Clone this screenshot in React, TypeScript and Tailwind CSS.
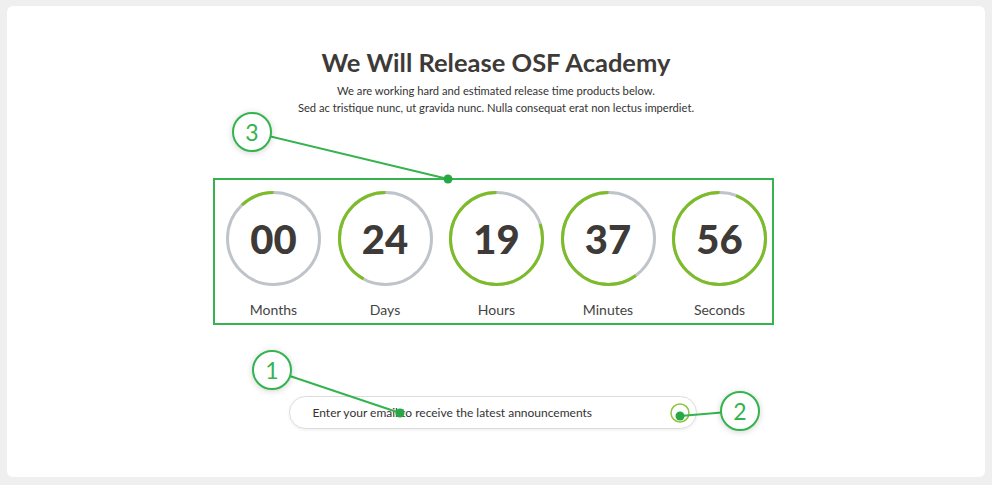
import React from "react";

const units = [
  { value: "00", label: "Months", progress: 0.12 },
  { value: "24", label: "Days", progress: 0.42 },
  { value: "19", label: "Hours", progress: 0.8 },
  { value: "37", label: "Minutes", progress: 0.6 },
  { value: "56", label: "Seconds", progress: 0.94 },
];

const R = 46;
const C = 2 * Math.PI * R;

const Ring = ({ value, label, progress }: { value: string; label: string; progress: number }) => {
  return (
    <div className="flex w-[95px] flex-col items-center">
      <div className="relative h-[95px] w-[95px]">
        <svg width="95" height="95" viewBox="0 0 95 95" className="absolute inset-0">
          <circle cx="47.5" cy="47.5" r={R} fill="none" stroke="#bfc4ca" strokeWidth="3" />
          <circle
            cx="47.5"
            cy="47.5"
            r={R}
            fill="none"
            stroke="#7cbd27"
            strokeWidth="3"
            strokeDasharray={`${C * progress} ${C}`}
            transform="translate(95 0) scale(-1 1) rotate(-90 47.5 47.5)"
          />
        </svg>
        <div className="absolute inset-0 flex items-center justify-center text-[40px] font-black leading-none text-[#3d3a38]">
          {value}
        </div>
      </div>
      <div className="mt-[15px] text-[14px] leading-[18px] text-[#444]">{label}</div>
    </div>
  );
};

const Marker = ({ n, x, y }: { n: number; x: number; y: number }) => (
  <div
    className="absolute flex h-[40px] w-[40px] items-center justify-center rounded-full border-2 border-[#34b34f] bg-white text-[23px] leading-none text-[#34b34f] shadow-[0_1px_6px_rgba(0,0,0,0.18)]"
    style={{ left: x - 20, top: y - 20 }}
  >
    {n}
  </div>
);

export default function App() {
  return (
    <div className="min-h-screen w-full bg-[#efefef] px-[7px] pt-[6px] font-['Lato','Open_Sans',sans-serif]">
      <div className="relative flex h-[471px] w-[978px] flex-col items-center rounded-[6px] bg-white">
        <h1 className="mt-[40px] text-[25.5px] font-bold leading-[32px] text-[#3d3a38]">
          We Will Release OSF Academy
        </h1>
        <p className="mt-[4px] text-center text-[11.2px] leading-[17px] text-[#333]">
          We are working hard and estimated release time products below.
          <br />
          Sed ac tristique nunc, ut gravida nunc. Nulla consequat erat non lectus imperdiet.
        </p>

        <div className="mt-[62px] ml-[206px] flex h-[147px] w-[561px] gap-[16.5px] self-start border-2 border-[#34b34f] pl-[11px] pt-[11px]">
          {units.map((u) => (
            <Ring key={u.label} {...u} />
          ))}
        </div>

        <div className="mt-[71px] ml-[-7px] flex h-[33px] w-[408px] items-center justify-between rounded-full border border-[#dcdcdc] pl-[23px] pr-[5px] shadow-[0_1px_3px_rgba(0,0,0,0.08)]">
          <span className="text-[12px] text-[#333]">
            Enter your email to receive the latest announcements
          </span>
          <svg width="22" height="22" viewBox="0 0 22 22" className="mt-[1px]">
            <circle cx="11" cy="11" r="9" fill="none" stroke="#8cc63f" strokeWidth="1.5" />
          </svg>
        </div>

        {/* annotations */}
        <svg className="pointer-events-none absolute inset-0" width="978" height="471">
          <line x1="245" y1="126" x2="441" y2="173" stroke="#34b34f" strokeWidth="2" />
          <circle cx="441" cy="173" r="4.5" fill="#27a844" />
          <line x1="265" y1="364" x2="393" y2="407" stroke="#34b34f" strokeWidth="2" />
          <circle cx="393" cy="407" r="4.5" fill="#27a844" />
          <line x1="733" y1="405" x2="673" y2="410" stroke="#34b34f" strokeWidth="2" />
          <circle cx="673" cy="410" r="4.5" fill="#27a844" />
        </svg>
        <Marker n={3} x={245} y={126} />
        <Marker n={1} x={265} y={364} />
        <Marker n={2} x={733} y={405} />
      </div>
    </div>
  );
}
